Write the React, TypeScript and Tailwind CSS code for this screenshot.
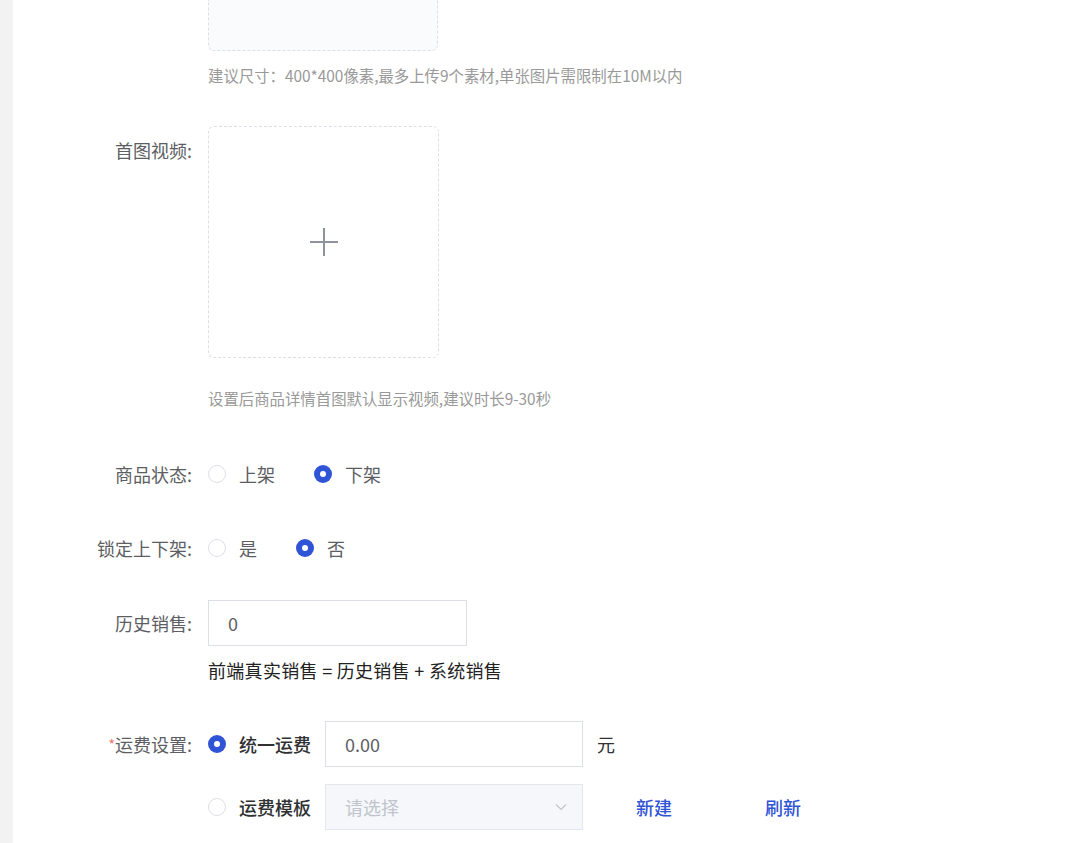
import React from 'react';

const font = { fontFamily: '"Noto Sans CJK SC", "Noto Sans", sans-serif' };

const Radio: React.FC<{ checked?: boolean; label: string; strong?: boolean }> = ({ checked, label, strong }) => (
  <label className="flex items-center gap-[13px] cursor-pointer">
    {checked ? (
      <span className="w-[18px] h-[18px] rounded-full bg-[#3054d6] flex items-center justify-center">
        <span className="w-[6px] h-[6px] rounded-full bg-white" />
      </span>
    ) : (
      <span className="w-[18px] h-[18px] rounded-full border border-[#dcdfe6] bg-white" />
    )}
    <span className={strong ? 'text-[#303133] font-medium' : 'text-[#5c5e63]'}>{label}</span>
  </label>
);

const Label: React.FC<{ children: React.ReactNode; required?: boolean }> = ({ children, required }) => (
  <div className="w-[195px] shrink-0 pr-[16px] text-right text-[#5c5e63] leading-[24px]">
    {required && <span className="text-[#f56c6c] text-[14px] align-top">*</span>}
    {children}
  </div>
);

const App: React.FC = () => {
  return (
    <div className="flex w-[1090px] h-[843px] overflow-hidden bg-white text-[18px]" style={font}>
      <div className="w-[13px] shrink-0 bg-[#f2f2f2]" />
      <div className="flex-1 flex flex-col">
        {/* previous upload box, cut off at top */}
        <div className="ml-[195px] w-[230px] h-[51px] border border-t-0 border-dashed border-[#dcdfe6] rounded-b-md bg-[#fafbfd]" />
        <p className="ml-[195px] mt-[14px] text-[15.4px] leading-[20px] text-[#999]">
          建议尺寸：400*400像素,最多上传9个素材,单张图片需限制在10M以内
        </p>

        <div className="flex mt-[41px]">
          <div className="pt-[12px]">
            <Label>首图视频:</Label>
          </div>
          <div className="flex flex-col">
            <div className="w-[231px] h-[232px] border border-dashed border-[#dcdfe6] rounded-md flex items-center justify-center">
              <svg width="32" height="32" viewBox="0 0 32 32" fill="none" stroke="#8c939d" strokeWidth="2">
                <path d="M16 2v28M2 16h28" />
              </svg>
            </div>
            <p className="mt-[30px] text-[15.4px] leading-[20px] text-[#999]">
              设置后商品详情首图默认显示视频,建议时长9-30秒
            </p>
          </div>
        </div>

        <div className="flex items-center mt-[54px] h-[24px]">
          <Label>商品状态:</Label>
          <div className="flex items-center gap-[39px]">
            <Radio label="上架" />
            <Radio label="下架" checked />
          </div>
        </div>

        <div className="flex items-center mt-[50px] h-[24px]">
          <Label>锁定上下架:</Label>
          <div className="flex items-center gap-[39px]">
            <Radio label="是" />
            <Radio label="否" checked />
          </div>
        </div>

        <div className="flex items-center mt-[40px]">
          <Label>历史销售:</Label>
          <input
            readOnly
            value="0"
            className="w-[259px] h-[46px] border border-[#dcdfe6] pl-[19px] text-[#5c5e63] outline-none"
          />
        </div>
        <p className="ml-[195px] mt-[12px] leading-[24px] text-[#222] tracking-[0.3px]">
          前端真实销售 = 历史销售 + 系统销售
        </p>

        <div className="flex items-center mt-[39px]">
          <Label required>运费设置:</Label>
          <Radio label="统一运费" checked strong />
          <input
            readOnly
            value="0.00"
            className="ml-[14px] w-[258px] h-[46px] border border-[#dcdfe6] pl-[19px] text-[#5c5e63] outline-none"
          />
          <span className="ml-[14px] text-[#303133]">元</span>
        </div>

        <div className="flex items-center mt-[17px]">
          <div className="w-[195px] shrink-0" />
          <Radio label="运费模板" strong />
          <div className="ml-[14px] w-[258px] h-[46px] border border-[#e4e7ed] bg-[#f5f7fa] pl-[19px] pr-[14px] flex items-center justify-between">
            <span className="text-[#c0c4cc]">请选择</span>
            <svg width="14" height="14" viewBox="0 0 14 14" fill="none" stroke="#c0c4cc" strokeWidth="1.2">
              <path d="M2 4.5l5 5 5-5" />
            </svg>
          </div>
          <a className="ml-[53px] text-[#3054d6] font-medium cursor-pointer">新建</a>
          <a className="ml-[93px] text-[#3054d6] font-medium cursor-pointer">刷新</a>
        </div>
      </div>
    </div>
  );
};

export default App;
